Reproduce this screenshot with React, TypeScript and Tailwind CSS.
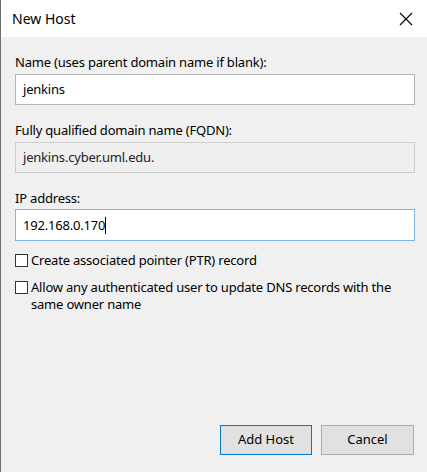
import React from "react";

export default function App() {
  const font = { fontFamily: '"Noto Sans", "Segoe UI", sans-serif' };
  return (
    <div className="w-[427px] h-[472px] bg-[#f0f0f0] border-l border-[#6f6f6f] flex flex-col text-[#000] overflow-hidden" style={font}>
      <div className="h-[37px] bg-white flex items-center justify-between pl-[11px] pr-[14px] shrink-0">
        <span className="text-[14px] leading-none">New Host</span>
        <svg width="14" height="14" viewBox="0 0 14 14">
          <path d="M1 1 L13 13 M13 1 L1 13" stroke="#000" strokeWidth="1.1" fill="none" />
        </svg>
      </div>
      <div className="flex flex-col pl-[14px] pr-[12px] text-[13px] leading-none tracking-[-0.2px]">
        <div className="mt-[18px] h-[14px] flex items-center">Name (uses parent domain name if blank):</div>
        <div className="mt-[5px] h-[31px] bg-white border border-[#b4b4b4] flex items-center pl-[7px]">jenkins</div>
        <div className="mt-[18px] h-[14px] flex items-center">Fully qualified domain name (FQDN):</div>
        <div className="mt-[5px] h-[31px] bg-[#efefef] border border-[#cccccc] flex items-center pl-[7px] text-[#222]">jenkins.cyber.uml.edu.</div>
        <div className="mt-[18px] h-[14px] flex items-center">IP address:</div>
        <div className="mt-[4px] h-[32px] bg-white border border-[#7eb4ea] flex items-center pl-[7px]">
          192.168.0.170<span className="inline-block w-[1px] h-[17px] bg-black"></span>
        </div>
        <div className="mt-[13px] flex items-center gap-[3px] h-[13px]">
          <span className="w-[13px] h-[13px] bg-white border border-[#333] shrink-0"></span>
          <span className="whitespace-nowrap">Create associated pointer (PTR) record</span>
        </div>
        <div className="mt-[13px] flex items-start gap-[3px]">
          <span className="w-[13px] h-[13px] bg-white border border-[#333] shrink-0 mt-[1px]"></span>
          <span className="leading-[17px] whitespace-nowrap -mt-[1px]">Allow any authenticated user to update DNS records with the<br />same owner name</span>
        </div>
      </div>
      <div className="mt-auto mb-[17px] flex justify-end gap-[9px] pr-[13px]">
        <button className="w-[92px] h-[30px] bg-[#e1e1e1] border border-[#0078d7] text-[13px]">Add Host</button>
        <button className="w-[93px] h-[30px] bg-[#e1e1e1] border border-[#adadad] text-[13px]">Cancel</button>
      </div>
    </div>
  );
}
